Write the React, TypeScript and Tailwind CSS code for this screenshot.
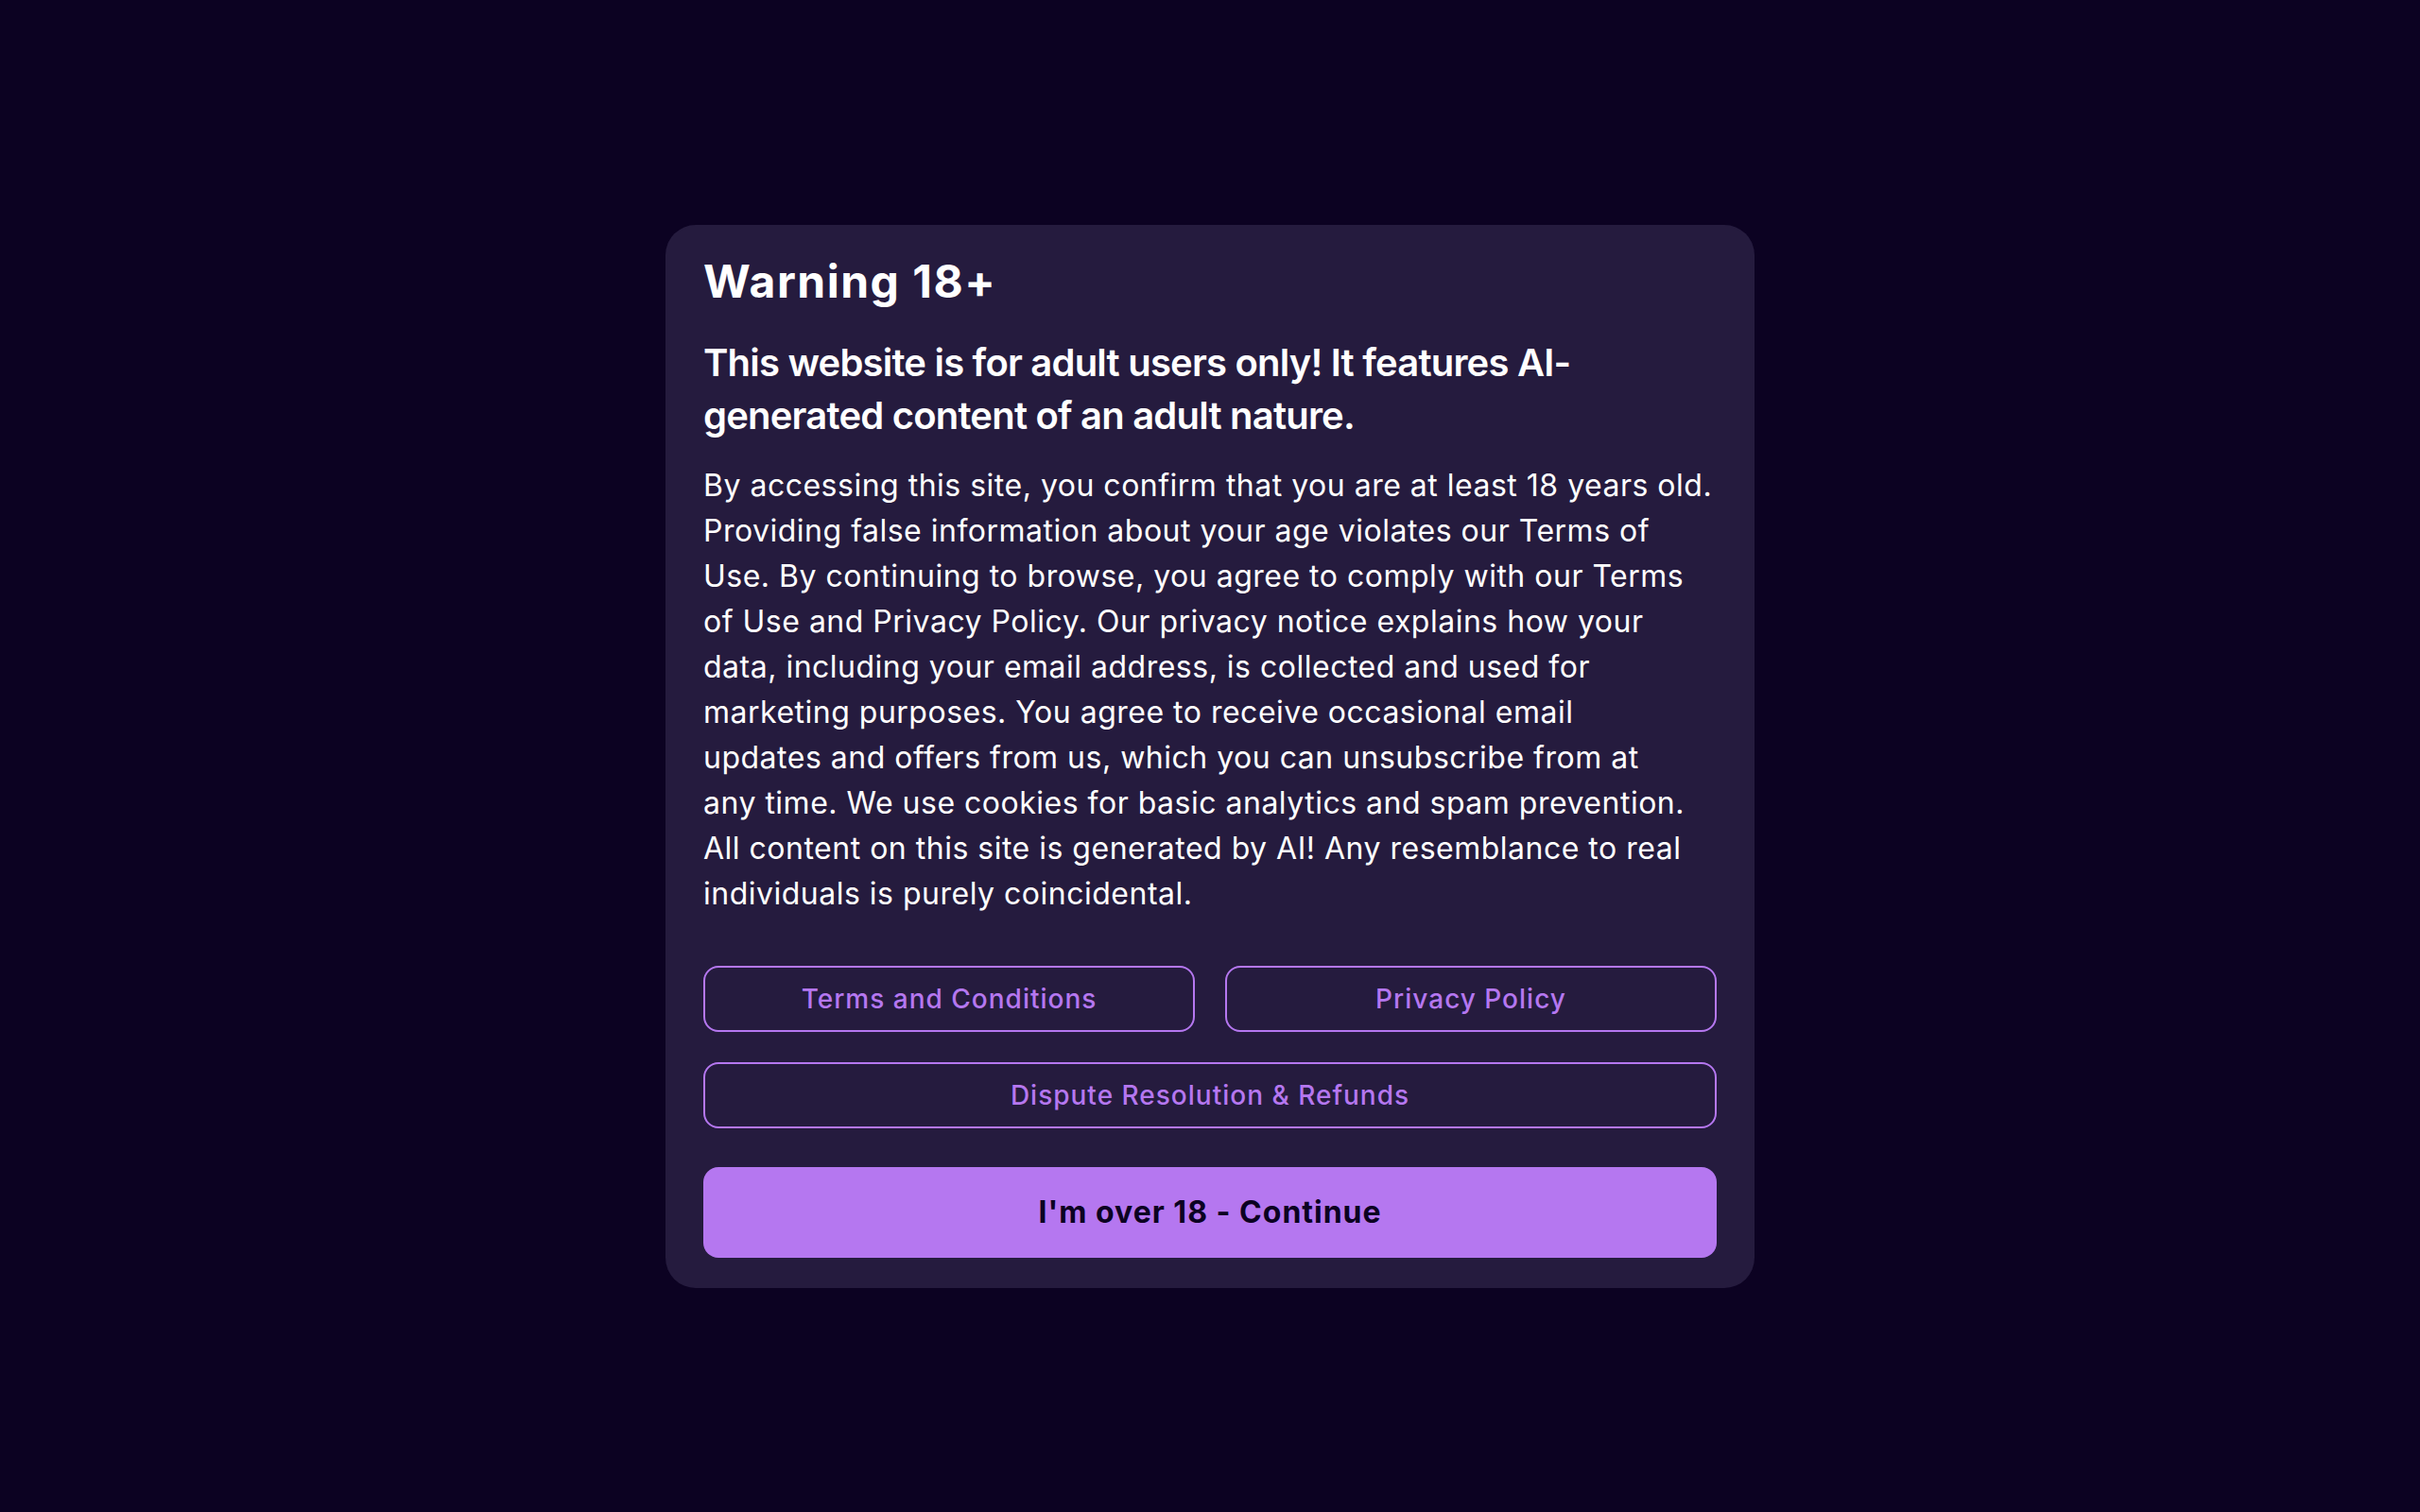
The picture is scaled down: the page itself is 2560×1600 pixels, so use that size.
import React from 'react';

const linkBtn =
  'h-[70px] flex items-center justify-center rounded-2xl border-2 border-[#b577f0] text-[28px] font-medium tracking-[1px] text-[#b577f0]';

export default function App() {
  return (
    <div
      className="min-h-screen w-full bg-[#0c0222] flex items-center justify-center"
      style={{ fontFamily: 'Inter, "Noto Sans", sans-serif' }}
    >
      <div className="w-[1152px] rounded-[32px] bg-[#251b3e] px-10 pt-[28px] pb-8">
        <h1 className="text-[48px] leading-[64px] font-bold tracking-[1.5px] text-white">Warning 18+</h1>
        <p className="mt-[26px] text-[40px] leading-[56px] font-semibold tracking-[-0.8px] text-white">
          This website is for adult users only! It features AI-generated content of an adult nature.
        </p>
        <p className="mt-[22px] text-[32px] leading-[48px] tracking-[0.5px] text-white">
          By accessing this site, you confirm that you are at least 18 years old. Providing false information
          about your age violates our Terms of Use. By continuing to browse, you agree to comply with our Terms
          of Use and Privacy Policy. Our privacy notice explains how your data, including your email address, is
          collected and used for marketing purposes. You agree to receive occasional email
          <br />
          updates and offers from us, which you can unsubscribe from at
          <br />
          any time. We use cookies for basic analytics and spam prevention.
          <br />
          All content on this site is generated by AI! Any resemblance to real
          <br />
          individuals is purely coincidental.
        </p>
        <div className="mt-[52px] flex flex-col gap-8">
          <div className="grid grid-cols-2 gap-8">
            <button className={linkBtn}>Terms and Conditions</button>
            <button className={linkBtn}>Privacy Policy</button>
          </div>
          <button className={linkBtn}>Dispute Resolution &amp; Refunds</button>
        </div>
        <button className="mt-[41px] h-24 w-full rounded-2xl bg-[#b577f0] text-[32px] font-bold tracking-[1px] text-[#0c0222]">
          I'm over 18 - Continue
        </button>
      </div>
    </div>
  );
}
